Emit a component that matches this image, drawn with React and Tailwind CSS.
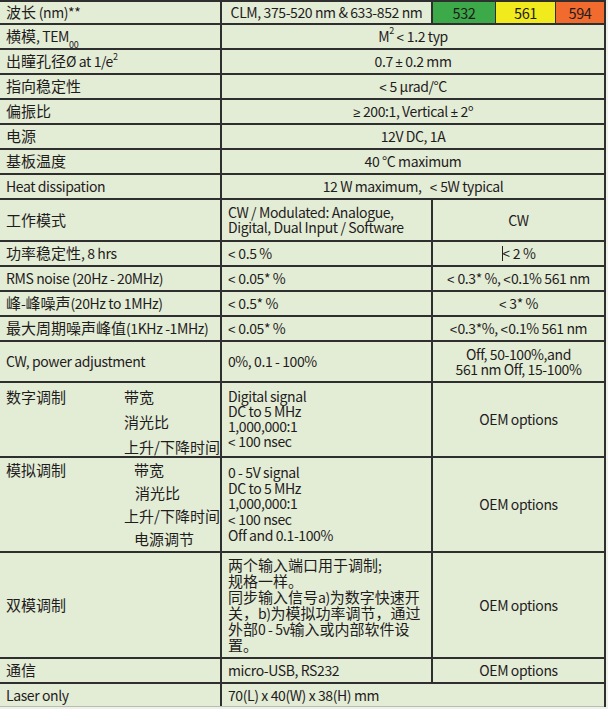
import React from 'react';

const ln = 'border-[#2f2f2f]';
const cjk = /([\u3000-\u9fff\uff00-\uffef]+)/;

// CJK runs are set a little larger than the latin text, as in the printed sheet
function T({ s }) {
  return (
    <>
      {s.split(cjk).map((p, i) =>
        cjk.test(p) ? (
          <span key={i} className="text-[15px] tracking-normal">
            {p}
          </span>
        ) : (
          p
        )
      )}
    </>
  );
}

// math signs from a latin face, the CJK face draws them full width
function M({ children }) {
  return <span className="font-['Liberation_Sans',sans-serif] text-[13px] tracking-normal">{children}</span>;
}

function Row({ h, children, last }) {
  return (
    <div className={`flex ${h} ${last ? 'border-b border-[#b9bdb4]' : `border-b-2 ${ln}`}`}>
      {children}
    </div>
  );
}

function Label({ children }) {
  return (
    <div className={`w-[222px] shrink-0 border-r-2 ${ln} pl-[6px] flex items-center whitespace-nowrap`}>
      {typeof children === 'string' ? <T s={children} /> : children}
    </div>
  );
}

function Mid({ children }) {
  return (
    <div className={`w-[211px] shrink-0 border-r-2 ${ln} pl-[6px] flex flex-col justify-center leading-[15px]`}>
      {children}
    </div>
  );
}

function Right({ children }) {
  return <div className="flex-1 flex flex-col items-center justify-center text-center leading-[15px]">{children}</div>;
}

function Span({ children }) {
  return <div className="flex-1 flex items-center justify-center">{children}</div>;
}

export default function App() {
  return (
    <div className="min-h-screen bg-[#eef0ea] text-[#1f1c1d] text-[14px] tracking-[-0.4px] font-['Noto_Sans_CJK_SC','Liberation_Sans',sans-serif]">
      <div className={`w-[606px] border-t-2 border-r-2 ${ln} bg-[#e3ecd5]`}>
        <Row h="h-[23px]">
          <Label>
            <span>
              <T s="波长" /> (nm)**
            </span>
          </Label>
          <div className={`w-[211px] shrink-0 border-r-2 ${ln} flex items-center justify-center whitespace-nowrap`}>
            CLM, 375-520 nm &amp; 633-852 nm
          </div>
          <div className={`w-[63px] border-r ${ln} bg-[#3daa49] flex items-center justify-center text-[14.5px]`}>532</div>
          <div className={`w-[60px] border-r ${ln} bg-[#f1ea1c] flex items-center justify-center text-[14.5px]`}>561</div>
          <div className="flex-1 bg-[#f26b2e] flex items-center justify-center text-[14.5px]">594</div>
        </Row>
        <Row h="h-[25px]">
          <Label>
            <span>
              <T s="横模" />, TEM<sub className="text-[9px] align-[-3px]">00</sub>
            </span>
          </Label>
          <Span>
            <span>
              M<sup className="text-[9px] align-[3px]">2</sup> <M>&lt;</M> 1.2 typ
            </span>
          </Span>
        </Row>
        <Row h="h-[25px]">
          <Label>
            <span>
              <T s="出瞳孔径" />Ø at 1/e<sup className="text-[9px] align-[3px]">2</sup>
            </span>
          </Label>
          <Span>
            <span>
              0.7 <M>±</M> 0.2 mm
            </span>
          </Span>
        </Row>
        <Row h="h-[25px]">
          <Label>指向稳定性</Label>
          <Span>
            <span>
              <M>&lt;</M> 5 µrad/°C
            </span>
          </Span>
        </Row>
        <Row h="h-[25px]">
          <Label>偏振比</Label>
          <Span>
            <span>
              <M>≥</M> 200:1, Vertical <M>±</M> 2<sup className="text-[9px] align-[1px]">o</sup>
            </span>
          </Span>
        </Row>
        <Row h="h-[25px]">
          <Label>电源</Label>
          <Span>12V DC, 1A</Span>
        </Row>
        <Row h="h-[25px]">
          <Label>基板温度</Label>
          <Span>40 °C maximum</Span>
        </Row>
        <Row h="h-[25px]">
          <Label>Heat dissipation</Label>
          <Span>
            <span>
              12 W maximum,&nbsp;&nbsp; <M>&lt;</M> 5W typical
            </span>
          </Span>
        </Row>
        <Row h="h-[42px]">
          <Label>工作模式</Label>
          <Mid>
            <div>CW / Modulated: Analogue,</div>
            <div>Digital, Dual Input / Software</div>
          </Mid>
          <Right>CW</Right>
        </Row>
        <Row h="h-[25px]">
          <Label>功率稳定性, 8 hrs</Label>
          <Mid>
            <div>
              <M>&lt;</M> 0.5 %
            </div>
          </Mid>
          <Right>
            <span className="flex items-center">
              <span className="inline-block w-px h-[15px] bg-[#231f20]" />
              <M>&lt;</M>&nbsp;2 %
            </span>
          </Right>
        </Row>
        <Row h="h-[25px]">
          <Label>RMS noise (20Hz - 20MHz)</Label>
          <Mid>
            <div>
              <M>&lt;</M> 0.05* %
            </div>
          </Mid>
          <Right>
            <div>
              <M>&lt;</M> 0.3* %, <M>&lt;</M>0.1% 561 nm
            </div>
          </Right>
        </Row>
        <Row h="h-[25px]">
          <Label>峰-峰噪声(20Hz to 1MHz)</Label>
          <Mid>
            <div>
              <M>&lt;</M> 0.5* %
            </div>
          </Mid>
          <Right>
            <div>
              <M>&lt;</M> 3* %
            </div>
          </Right>
        </Row>
        <Row h="h-[25px]">
          <Label>最大周期噪声峰值(1KHz -1MHz)</Label>
          <Mid>
            <div>
              <M>&lt;</M> 0.05* %
            </div>
          </Mid>
          <Right>
            <div>
              <M>&lt;</M>0.3*%, <M>&lt;</M>0.1% 561 nm
            </div>
          </Right>
        </Row>
        <Row h="h-[41px]">
          <Label>CW, power adjustment</Label>
          <Mid>0%, 0.1 - 100%</Mid>
          <Right>
            <div>Off, 50-100%,and</div>
            <div>561 nm Off, 15-100%</div>
          </Right>
        </Row>
        <Row h="h-[75px]">
          <div className={`w-[222px] shrink-0 border-r-2 ${ln} pl-[6px] pt-[3px] flex whitespace-nowrap text-[15px] tracking-normal`}>
            <div className="w-[122px] leading-[22px]">数字调制</div>
            <div className="flex flex-col gap-[3px] leading-[22px]">
              <div>带宽</div>
              <div>消光比</div>
              <div>上升/下降时间</div>
            </div>
          </div>
          <Mid>
            <div>Digital signal</div>
            <div>DC to 5 MHz</div>
            <div>1,000,000:1</div>
            <div>
              <M>&lt;</M> 100 nsec
            </div>
          </Mid>
          <Right>OEM options</Right>
        </Row>
        <Row h="h-[95px]">
          <div className={`w-[222px] shrink-0 border-r-2 ${ln} pl-[6px] pt-[1px] flex whitespace-nowrap text-[15px] tracking-normal`}>
            <div className="w-[119px] leading-[22px]">模拟调制</div>
            <div className="flex flex-col gap-[1px] leading-[22px]">
              <div className="pl-[10px]">带宽</div>
              <div className="pl-[11px]">消光比</div>
              <div>上升/下降时间</div>
              <div className="pl-[10px]">电源调节</div>
            </div>
          </div>
          <Mid>
            <div className="leading-[15.5px]">0 - 5V signal</div>
            <div className="leading-[15.5px]">DC to 5 MHz</div>
            <div className="leading-[15.5px]">1,000,000:1</div>
            <div className="leading-[15.5px]">
              <M>&lt;</M> 100 nsec
            </div>
            <div className="leading-[15.5px]">Off and 0.1-100%</div>
          </Mid>
          <Right>OEM options</Right>
        </Row>
        <Row h="h-[106px]">
          <Label>双模调制</Label>
          <Mid>
            <div className="whitespace-nowrap leading-[16px]"><T s="两个输入端口用于调制;" /></div>
            <div className="whitespace-nowrap leading-[16px]"><T s="规格一样。" /></div>
            <div className="whitespace-nowrap leading-[16px]"><T s="同步输入信号a)为数字快速开" /></div>
            <div className="whitespace-nowrap leading-[16px]"><T s="关，b)为模拟功率调节，通过" /></div>
            <div className="whitespace-nowrap leading-[16px]"><T s="外部0 - 5v输入或内部软件设" /></div>
            <div className="whitespace-nowrap leading-[16px]"><T s="置。" /></div>
          </Mid>
          <Right>OEM options</Right>
        </Row>
        <Row h="h-[25px]">
          <Label>通信</Label>
          <Mid>micro-USB, RS232</Mid>
          <Right>OEM options</Right>
        </Row>
        <Row h="h-[23px]" last>
          <Label>Laser only</Label>
          <div className="flex-1 flex items-center pl-[6px]">70(L) x 40(W) x 38(H) mm</div>
        </Row>
      </div>
    </div>
  );
}
